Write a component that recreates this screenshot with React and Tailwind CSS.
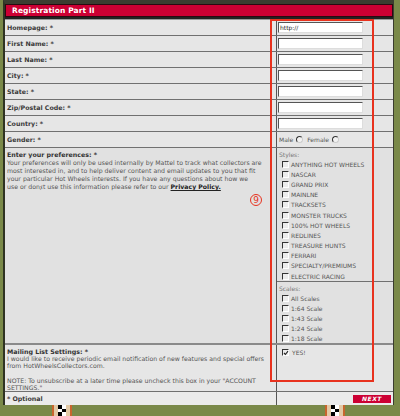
import React from "react";

const styles = [
  "ANYTHING HOT WHEELS",
  "NASCAR",
  "GRAND PRIX",
  "MAINLNE",
  "TRACKSETS",
  "MONSTER TRUCKS",
  "100% HOT WHEELS",
  "REDLINES",
  "TREASURE HUNTS",
  "FERRARI",
  "SPECIALTY/PREMIUMS",
  "ELECTRIC RACING",
];

const scales = ["All Scales", "1:64 Scale", "1:43 Scale", "1:24 Scale", "1:18 Scale"];

const fields = [
  { label: "Homepage:", value: "http://" },
  { label: "First Name:" },
  { label: "Last Name:" },
  { label: "City:" },
  { label: "State:" },
  { label: "Zip/Postal Code:" },
  { label: "Country:" },
];

// old-school inset checkbox
const Box = ({ checked }) => (
  <span className="relative inline-block w-[7px] h-[7px] shrink-0 bg-[#ececec] border-t border-l border-t-[#333] border-l-[#333] border-b border-r border-b-[#fff] border-r-[#fff]">
    {checked && (
      <svg viewBox="0 0 6 6" className="absolute inset-0 w-[6px] h-[6px]">
        <path d="M1 3 L2.4 4.5 L5 1.2" fill="none" stroke="#222" strokeWidth="1.1" />
      </svg>
    )}
  </span>
);

const Radio = () => (
  <span className="inline-block w-[7px] h-[7px] rounded-full bg-[#f2f2f2] border border-t-[#333] border-l-[#333] border-b-[#ccc] border-r-[#ccc]" />
);

const Field = ({ value }) => (
  <div className="w-[85px] h-[11px] bg-white border-t border-l border-t-[#555] border-l-[#555] border-b border-r border-b-[#ddd] border-r-[#ddd] text-[6px] leading-[9px] pl-[1px] text-[#222]">
    {value}
  </div>
);

// checkered pole at the foot of the page
const Pole = () => (
  <div className="w-[20px] h-[11px] bg-[#e2c9a6] border-x-2 border-[#c8652e] flex justify-center">
    <div className="w-[8px] h-full grid grid-cols-2">
      <div className="bg-black" />
      <div className="bg-white" />
      <div className="bg-white" />
      <div className="bg-black" />
      <div className="bg-black" />
      <div className="bg-white" />
    </div>
  </div>
);

export default function App() {
  return (
    <div className="relative w-[400px] h-[416px] overflow-hidden bg-[#7a8949] font-['DejaVu_Sans','Noto_Sans_CJK_JP',sans-serif] text-[#444]">
      <div className="ml-[3px] w-[391px] bg-[#e6e6e6] border-l-2 border-[#2f3323] border-t-4 border-t-[#3b3d30] border-r border-r-[#3b3d30]">
        {/* section header */}
        <div className="h-[13px] bg-[#cc0033] border border-[#2a0a10] flex items-center pl-[6px]">
          <span className="text-white text-[7.5px] font-bold tracking-[0.1px]">Registration Part II</span>
        </div>
        <div className="h-[3px] bg-[#222] border-b border-[#999]" />

        {/* text fields */}
        {fields.map((f) => (
          <div key={f.label} className="flex h-[16px] border-b border-[#707070]">
            <div className="w-[272px] flex items-center pl-[2px] border-r border-[#555] text-[6.3px] font-bold text-[#3a3a3a]">
              {f.label} *
            </div>
            <div className="flex-1 flex items-center pl-[1px]">
              <Field value={f.value} />
            </div>
          </div>
        ))}

        {/* gender */}
        <div className="flex h-[16px] border-b border-[#707070]">
          <div className="w-[272px] flex items-center pl-[2px] border-r border-[#555] text-[6.3px] font-bold text-[#3a3a3a]">
            Gender: *
          </div>
          <div className="flex-1 flex items-center pl-[2px] gap-[3px] text-[6px] text-[#555]">
            <span>Male</span>
            <Radio />
            <span className="ml-[1px]">Female</span>
            <Radio />
          </div>
        </div>

        {/* preferences */}
        <div className="flex h-[197px] bg-[#e1e1e1] border-b-2 border-[#8a8a8a]">
          <div className="w-[272px] pl-[2px] pt-[3px] border-r border-[#555] text-[6.2px] leading-[8px] text-[#555] whitespace-nowrap">
            <div className="font-bold text-[6.3px] text-[#333]">Enter your preferences: *</div>
            Your preferences will only be used internally by Mattel to track what collectors are
            <br />
            most interested in, and to help deliver content and email updates to you that fit
            <br />
            your particular Hot Wheels interests. If you have any questions about how we
            <br />
            use or donﾒt use this information please refer to our{" "}
            <span className="font-bold underline text-[#222]">Privacy Policy.</span>
          </div>
          <div className="flex-1 flex flex-col text-[6px] text-[#555]">
            <div className="h-[134px] pl-[2px] pt-[2px] border-b border-[#707070]">
              <div className="text-[#777] leading-[9px]">Styles:</div>
              {styles.map((s) => (
                <div key={s} className="flex items-center gap-[2px] h-[10.2px] pl-[3px]">
                  <Box />
                  <span>{s}</span>
                </div>
              ))}
            </div>
            <div className="flex-1 pl-[2px] pt-[2px]">
              <div className="text-[#777] leading-[9px]">Scales:</div>
              {scales.map((s) => (
                <div key={s} className="flex items-center gap-[2px] h-[10.2px] pl-[3px]">
                  <Box />
                  <span>{s}</span>
                </div>
              ))}
            </div>
          </div>
        </div>

        {/* mailing list */}
        <div className="flex h-[47px] border-b border-[#707070]">
          <div className="w-[272px] pl-[2px] pt-[3px] border-r border-[#555] text-[6.2px] leading-[7.2px] text-[#555] whitespace-nowrap">
            <div className="font-bold text-[6.3px] text-[#333]">Mailing List Settings: *</div>
            I would like to receive periodic email notification of new features and special offers
            <br />
            from HotWheelsCollectors.com.
            <br />
            <br />
            NOTE: To unsubscribe at a later time please uncheck this box in your "ACCOUNT
            <br />
            SETTINGS."
          </div>
          <div className="flex-1 pl-[5px] pt-[4px] flex items-start gap-[3px] text-[6px] text-[#555]">
            <Box checked />
            <span className="leading-[8px]">YES!</span>
          </div>
        </div>

        {/* footer row */}
        <div className="flex h-[13px] bg-[#ebebeb]">
          <div className="w-[272px] flex items-center pl-[2px] border-r border-[#555] text-[6.3px] font-bold text-[#3a3a3a]">
            * Optional
          </div>
          <div className="flex-1 flex items-center justify-end pr-[2px]">
            <button className="w-[38px] h-[8px] bg-[#cc0033] text-white text-[6px] leading-[8px] font-bold italic text-center tracking-[0.5px]">
              NEXT
            </button>
          </div>
        </div>
      </div>

      <div className="flex">
        <div className="ml-[52px]">
          <Pole />
        </div>
        <div className="ml-[253px]">
          <Pole />
        </div>
      </div>

      {/* annotation overlay */}
      <div className="absolute left-[270px] top-[19px] w-[104px] h-[363px] border-2 border-[#e8321e]" />
      <div className="absolute left-[250px] top-[194px] w-[12px] h-[12px] rounded-full border border-[#e8321e] text-[#e8321e] text-[9px] leading-[10px] text-center">
        9
      </div>
    </div>
  );
}
